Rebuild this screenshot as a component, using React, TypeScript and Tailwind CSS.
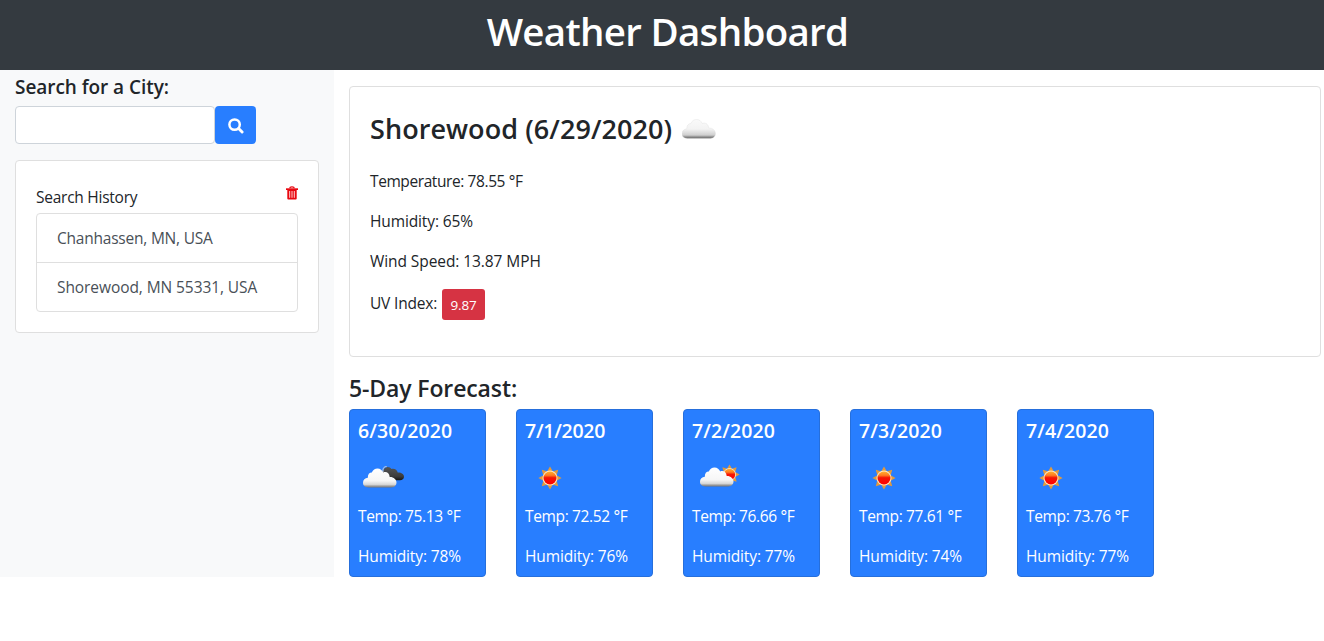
type Weather = 'clouds' | 'sun' | 'partly';

const forecast: { date: string; icon: Weather; temp: string; humidity: string; tracking: string }[] = [
  { date: '6/30/2020', icon: 'clouds', temp: '75.13', humidity: '78', tracking: 'tracking-[0.12px]' },
  { date: '7/1/2020', icon: 'sun', temp: '72.52', humidity: '76', tracking: 'tracking-[-0.25px]' },
  { date: '7/2/2020', icon: 'partly', temp: '76.66', humidity: '77', tracking: 'tracking-[0.1px]' },
  { date: '7/3/2020', icon: 'sun', temp: '77.61', humidity: '74', tracking: 'tracking-[0.1px]' },
  { date: '7/4/2020', icon: 'sun', temp: '73.76', humidity: '77', tracking: 'tracking-[0.1px]' },
];

const history = [
  { city: 'Chanhassen, MN, USA', tracking: 'tracking-[-0.22px]' },
  { city: 'Shorewood, MN 55331, USA', tracking: 'tracking-[-0.08px]' },
];

const cloudPath =
  'M5.5 19.5C2 19.5 0 17.5 0 14.8C0 12 2 10 4.8 9.8C4.8 6.5 6.3 4.6 8.8 4.6C10 1.8 12 .5 14.5 .5C17.3 .5 19.3 2.2 20.2 4.5C23.5 3.2 26.3 5.2 26.7 9C30.5 8.8 33.5 11.4 33.5 14.6C33.5 17.6 31.3 19.5 28.3 19.5Z';

function Gradients() {
  return (
    <svg className="absolute size-0" aria-hidden="true">
      <defs>
        <linearGradient id="cloud" x1="0" y1="0" x2="0" y2="1">
          <stop offset="0" stopColor="#fff" />
          <stop offset=".65" stopColor="#f6f6f6" />
          <stop offset=".84" stopColor="#d8d8d8" />
          <stop offset=".93" stopColor="#9a9a9a" />
          <stop offset="1" stopColor="#777" />
        </linearGradient>
        <linearGradient id="grayCloud" x1="0" y1="0" x2="0" y2="1">
          <stop offset="0" stopColor="#fafafa" />
          <stop offset=".5" stopColor="#f3f3f3" />
          <stop offset=".82" stopColor="#cfcfcf" />
          <stop offset=".93" stopColor="#858585" />
          <stop offset="1" stopColor="#6d6d6d" />
        </linearGradient>
        <linearGradient id="darkCloud" x1="0" y1="0" x2="0" y2="1">
          <stop offset="0" stopColor="#555" />
          <stop offset=".7" stopColor="#3c3c3c" />
          <stop offset="1" stopColor="#151515" />
        </linearGradient>
        <linearGradient id="sun" x1="0" y1="0" x2="0" y2="1">
          <stop offset="0" stopColor="#ffb02e" />
          <stop offset=".3" stopColor="#ff7a20" />
          <stop offset=".48" stopColor="#f51505" />
          <stop offset="1" stopColor="#f00" />
        </linearGradient>
      </defs>
    </svg>
  );
}

function Sun() {
  return (
    <g>
      {[0, 45, 90, 135, 180, 225, 270, 315].map((a) => (
        <path key={a} d="M-2.6 -7L0 -11.6L2.6 -7Z" fill="#e39a3c" transform={`rotate(${a})`} />
      ))}
      <circle r="7.5" fill="#ffe6c0" />
      <circle r="6.5" fill="url(#sun)" />
    </g>
  );
}

function WeatherIcon({ kind }: { kind: Weather }) {
  return (
    <svg width="50" height="50" viewBox="0 0 50 50" className="block">
      {kind === 'clouds' && (
        <>
          <path
            d="M25 21C24.7 16.5 26 13.5 29 13.2C31 12.8 32.5 14 33.5 15C36 14 39.3 15.8 39.7 18.6C43 18.3 46 20 46 22.7C46 25 44.2 26.2 42 26.2H30Z"
            transform="translate(0 1)"
            fill="url(#darkCloud)"
          />
          <path d="M25 19C24.5 15.5 26 13.4 28.6 13.6" stroke="#d8d8d8" fill="none" />
          <path d={cloudPath} fill="url(#cloud)" transform="translate(5 15)" />
        </>
      )}
      {kind === 'sun' && (
        <g transform="translate(25 25)">
          <Sun />
        </g>
      )}
      {kind === 'partly' && (
        <>
          <g transform="translate(37.5 21.5) scale(.87)">
            <Sun />
          </g>
          <path d={cloudPath} fill="url(#cloud)" transform="translate(8 14)" />
        </>
      )}
    </svg>
  );
}

export default function App() {
  return (
    <div className="min-h-[641px] bg-white font-['Open_Sans','Noto_Sans',sans-serif] text-[15.5px] leading-6 tracking-[-0.12px] text-[#212529]">
      <Gradients />
      <header className="h-[70px] bg-[#343a40] pt-[7px] pl-[11px] text-center">
        <h1 className="text-[38.5px] leading-12 font-semibold tracking-[-0.7px] text-white">
          Weather Dashboard
        </h1>
      </header>
      <div className="flex">
        <aside className="h-[507px] w-[334px] bg-[#f8f9fa] px-[15px] pt-[5px]">
          <h2 className="text-[19px] leading-6 font-semibold tracking-[-0.05px]">Search for a City:</h2>
          <div className="mt-[7px] flex">
            <input
              type="text"
              aria-label="City"
              className="h-[38px] w-[200px] rounded border border-[#ced4da] bg-white px-3 outline-none"
            />
            <button
              aria-label="Search"
              className="flex h-[38px] w-[41px] items-center justify-center rounded bg-[#287eff] pt-0.5"
            >
              <svg width="16" height="16" viewBox="0 0 16 16" fill="none" stroke="#fff">
                <circle cx="6.6" cy="6.6" r="5.2" strokeWidth="2.5" />
                <path d="M10.6 10.5L14.1 14" strokeWidth="2.9" strokeLinecap="round" />
              </svg>
            </button>
          </div>
          <section className="mt-4 h-[173px] w-[304px] rounded border border-[#dfdfdf] bg-white px-5 pt-6">
            <div className="flex justify-between">
              <h3 className="h-7 tracking-[-0.25px]">Search History</h3>
              <button aria-label="Clear history" className="mt-px h-[14px] w-3">
                <svg width="12" height="14" viewBox="0 0 12 14" className="block">
                  <path d="M3.8 2.2Q3.8 .8 6 .8T8.2 2.2" fill="none" stroke="#e80810" strokeWidth="1.2" />
                  <path d="M0 2.3H12V4H0Z" fill="#e80810" />
                  <path d="M1.3 4H10.7V12.5Q10.7 13.5 9.7 13.5H2.3Q1.3 13.5 1.3 12.5Z" fill="#e80810" />
                  <path d="M3.7 5V11.8M6 5V11.8M8.3 5V11.8" stroke="#ffd0d0" strokeWidth="1" />
                </svg>
              </button>
            </div>
            <ul className="h-[99px] divide-y divide-[#dfdfdf] rounded border border-[#dfdfdf] text-[#495057]">
              {history.map(({ city, tracking }) => (
                <li key={city} className={`h-[49px] px-5 pt-3 ${tracking}`}>
                  {city}
                </li>
              ))}
            </ul>
          </section>
        </aside>
        <main className="pt-4 pl-[15px]">
          <section className="h-[271px] w-[972px] rounded border border-[#dfdfdf] px-5 pt-[23px]">
            <h2 className="flex h-[38px] items-center text-[27px] font-semibold tracking-[0.07px]">
              Shorewood (6/29/2020)
              <svg width="34" height="20" viewBox="0 0 34 20" className="ml-2.5">
                <path d={cloudPath} fill="url(#grayCloud)" stroke="#dedede" strokeWidth=".4" />
              </svg>
            </h2>
            <p className="mt-[21px] tracking-[-0.41px]">Temperature: 78.55 °F</p>
            <p className="mt-4">Humidity: 65%</p>
            <p className="mt-4 tracking-[-0.08px]">Wind Speed: 13.87 MPH</p>
            <div className="mt-4 flex">
              <p className="mt-0.5 w-[68px] tracking-[-0.18px] whitespace-nowrap">UV Index:</p>
              <span className="ml-1 flex h-[31px] w-[43px] items-center justify-center rounded-[3px] bg-[#d63343] text-[13.5px] text-white">
                9.87
              </span>
            </div>
          </section>
          <h2 className="mt-[17px] text-[23px] leading-[29px] font-semibold tracking-[-0.12px]">
            5-Day Forecast:
          </h2>
          <div className="mt-1.5 flex gap-[30px] text-white">
            {forecast.map((day) => (
              <article
                key={day.date}
                className="h-[168px] w-[137px] rounded border border-[#266fdc] bg-[#287eff] px-2 pt-[9px]"
              >
                <h3 className={`text-[19.5px] leading-6 font-semibold ${day.tracking}`}>{day.date}</h3>
                <div className="mt-2.5 h-[51px]">
                  <WeatherIcon kind={day.icon} />
                </div>
                <p className="tracking-[-0.35px]">Temp: {day.temp} °F</p>
                <p className="mt-4">Humidity: {day.humidity}%</p>
              </article>
            ))}
          </div>
        </main>
      </div>
    </div>
  );
}
